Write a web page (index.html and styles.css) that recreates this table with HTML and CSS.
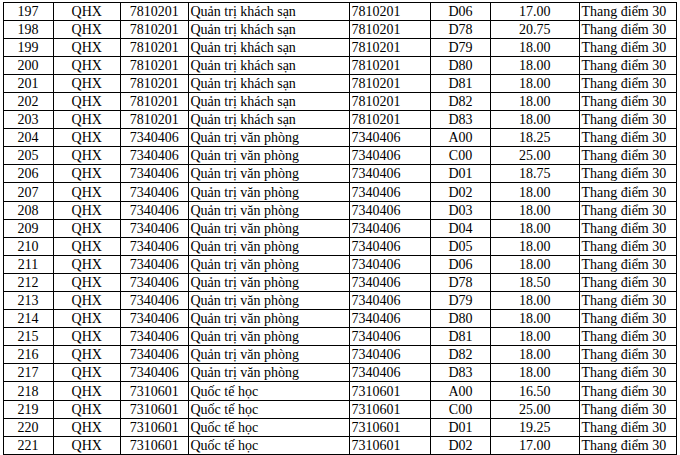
FILE: index.html
```html
<!DOCTYPE html>
<html lang="vi">
<head>
<meta charset="utf-8">
<link rel="stylesheet" href="styles.css">
</head>
<body>
<table class="grid">
<colgroup>
<col class="c-stt"><col class="c-ma"><col class="c-nganh"><col class="c-ten"><col class="c-ma2"><col class="c-tohop"><col class="c-diem"><col class="c-thang">
</colgroup>
<tbody>
<tr><td class="ctr">197</td><td class="ctr">QHX</td><td class="ctr">7810201</td><td class="lft">Quản trị khách sạn</td><td class="lft">7810201</td><td class="ctr">D06</td><td class="ctr">17.00</td><td class="lft">Thang điểm 30</td></tr>
<tr><td class="ctr">198</td><td class="ctr">QHX</td><td class="ctr">7810201</td><td class="lft">Quản trị khách sạn</td><td class="lft">7810201</td><td class="ctr">D78</td><td class="ctr">20.75</td><td class="lft">Thang điểm 30</td></tr>
<tr><td class="ctr">199</td><td class="ctr">QHX</td><td class="ctr">7810201</td><td class="lft">Quản trị khách sạn</td><td class="lft">7810201</td><td class="ctr">D79</td><td class="ctr">18.00</td><td class="lft">Thang điểm 30</td></tr>
<tr><td class="ctr">200</td><td class="ctr">QHX</td><td class="ctr">7810201</td><td class="lft">Quản trị khách sạn</td><td class="lft">7810201</td><td class="ctr">D80</td><td class="ctr">18.00</td><td class="lft">Thang điểm 30</td></tr>
<tr><td class="ctr">201</td><td class="ctr">QHX</td><td class="ctr">7810201</td><td class="lft">Quản trị khách sạn</td><td class="lft">7810201</td><td class="ctr">D81</td><td class="ctr">18.00</td><td class="lft">Thang điểm 30</td></tr>
<tr><td class="ctr">202</td><td class="ctr">QHX</td><td class="ctr">7810201</td><td class="lft">Quản trị khách sạn</td><td class="lft">7810201</td><td class="ctr">D82</td><td class="ctr">18.00</td><td class="lft">Thang điểm 30</td></tr>
<tr><td class="ctr">203</td><td class="ctr">QHX</td><td class="ctr">7810201</td><td class="lft">Quản trị khách sạn</td><td class="lft">7810201</td><td class="ctr">D83</td><td class="ctr">18.00</td><td class="lft">Thang điểm 30</td></tr>
<tr><td class="ctr">204</td><td class="ctr">QHX</td><td class="ctr">7340406</td><td class="lft">Quản trị văn phòng</td><td class="lft">7340406</td><td class="ctr">A00</td><td class="ctr">18.25</td><td class="lft">Thang điểm 30</td></tr>
<tr><td class="ctr">205</td><td class="ctr">QHX</td><td class="ctr">7340406</td><td class="lft">Quản trị văn phòng</td><td class="lft">7340406</td><td class="ctr">C00</td><td class="ctr">25.00</td><td class="lft">Thang điểm 30</td></tr>
<tr><td class="ctr">206</td><td class="ctr">QHX</td><td class="ctr">7340406</td><td class="lft">Quản trị văn phòng</td><td class="lft">7340406</td><td class="ctr">D01</td><td class="ctr">18.75</td><td class="lft">Thang điểm 30</td></tr>
<tr><td class="ctr">207</td><td class="ctr">QHX</td><td class="ctr">7340406</td><td class="lft">Quản trị văn phòng</td><td class="lft">7340406</td><td class="ctr">D02</td><td class="ctr">18.00</td><td class="lft">Thang điểm 30</td></tr>
<tr><td class="ctr">208</td><td class="ctr">QHX</td><td class="ctr">7340406</td><td class="lft">Quản trị văn phòng</td><td class="lft">7340406</td><td class="ctr">D03</td><td class="ctr">18.00</td><td class="lft">Thang điểm 30</td></tr>
<tr><td class="ctr">209</td><td class="ctr">QHX</td><td class="ctr">7340406</td><td class="lft">Quản trị văn phòng</td><td class="lft">7340406</td><td class="ctr">D04</td><td class="ctr">18.00</td><td class="lft">Thang điểm 30</td></tr>
<tr><td class="ctr">210</td><td class="ctr">QHX</td><td class="ctr">7340406</td><td class="lft">Quản trị văn phòng</td><td class="lft">7340406</td><td class="ctr">D05</td><td class="ctr">18.00</td><td class="lft">Thang điểm 30</td></tr>
<tr><td class="ctr">211</td><td class="ctr">QHX</td><td class="ctr">7340406</td><td class="lft">Quản trị văn phòng</td><td class="lft">7340406</td><td class="ctr">D06</td><td class="ctr">18.00</td><td class="lft">Thang điểm 30</td></tr>
<tr><td class="ctr">212</td><td class="ctr">QHX</td><td class="ctr">7340406</td><td class="lft">Quản trị văn phòng</td><td class="lft">7340406</td><td class="ctr">D78</td><td class="ctr">18.50</td><td class="lft">Thang điểm 30</td></tr>
<tr><td class="ctr">213</td><td class="ctr">QHX</td><td class="ctr">7340406</td><td class="lft">Quản trị văn phòng</td><td class="lft">7340406</td><td class="ctr">D79</td><td class="ctr">18.00</td><td class="lft">Thang điểm 30</td></tr>
<tr><td class="ctr">214</td><td class="ctr">QHX</td><td class="ctr">7340406</td><td class="lft">Quản trị văn phòng</td><td class="lft">7340406</td><td class="ctr">D80</td><td class="ctr">18.00</td><td class="lft">Thang điểm 30</td></tr>
<tr><td class="ctr">215</td><td class="ctr">QHX</td><td class="ctr">7340406</td><td class="lft">Quản trị văn phòng</td><td class="lft">7340406</td><td class="ctr">D81</td><td class="ctr">18.00</td><td class="lft">Thang điểm 30</td></tr>
<tr><td class="ctr">216</td><td class="ctr">QHX</td><td class="ctr">7340406</td><td class="lft">Quản trị văn phòng</td><td class="lft">7340406</td><td class="ctr">D82</td><td class="ctr">18.00</td><td class="lft">Thang điểm 30</td></tr>
<tr><td class="ctr">217</td><td class="ctr">QHX</td><td class="ctr">7340406</td><td class="lft">Quản trị văn phòng</td><td class="lft">7340406</td><td class="ctr">D83</td><td class="ctr">18.00</td><td class="lft">Thang điểm 30</td></tr>
<tr><td class="ctr">218</td><td class="ctr">QHX</td><td class="ctr">7310601</td><td class="lft">Quốc tế học</td><td class="lft">7310601</td><td class="ctr">A00</td><td class="ctr">16.50</td><td class="lft">Thang điểm 30</td></tr>
<tr><td class="ctr">219</td><td class="ctr">QHX</td><td class="ctr">7310601</td><td class="lft">Quốc tế học</td><td class="lft">7310601</td><td class="ctr">C00</td><td class="ctr">25.00</td><td class="lft">Thang điểm 30</td></tr>
<tr><td class="ctr">220</td><td class="ctr">QHX</td><td class="ctr">7310601</td><td class="lft">Quốc tế học</td><td class="lft">7310601</td><td class="ctr">D01</td><td class="ctr">19.25</td><td class="lft">Thang điểm 30</td></tr>
<tr><td class="ctr">221</td><td class="ctr">QHX</td><td class="ctr">7310601</td><td class="lft">Quốc tế học</td><td class="lft">7310601</td><td class="ctr">D02</td><td class="ctr">17.00</td><td class="lft">Thang điểm 30</td></tr>
</tbody>
</table>
</body>
</html>
```
FILE: styles.css
```css
html, body {
  margin: 0;
  padding: 0;
  background: #fff;
}
body {
  font-family: "Liberation Serif", "Times New Roman", serif;
  font-size: 14px;
  color: #000;
}
.grid {
  border-collapse: collapse;
  table-layout: fixed;
  width: 673px;
  margin: 1.5px 0 0 2.5px;
}
.c-stt { width: 50px; }
.c-ma { width: 67.5px; }
.c-nganh { width: 67.5px; }
.c-ten { width: 161px; }
.c-ma2 { width: 81.5px; }
.c-tohop { width: 60px; }
.c-diem { width: 88.5px; }
.c-thang { width: 97px; }
.grid td {
  border: 1px solid #000;
  height: 17.1px;
  padding: 0 2px;
  line-height: 17px;
  vertical-align: bottom;
  white-space: nowrap;
  overflow: hidden;
}
.ctr { text-align: center; }
.lft { text-align: left; }
```
